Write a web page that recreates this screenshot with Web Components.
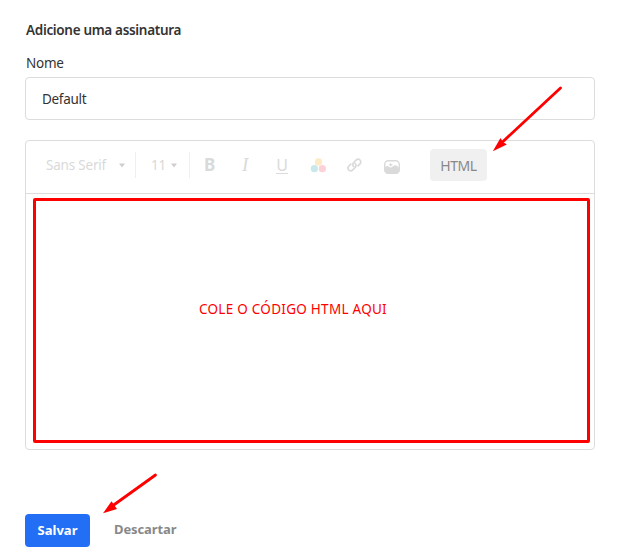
<!DOCTYPE html>
<html lang="pt-BR">
<head>
<meta charset="utf-8">
<title>Adicione uma assinatura</title>
<style>
html,body{margin:0;background:#fff}
body{width:624px;height:558px;overflow:hidden;font-family:"Noto Sans","Open Sans",sans-serif;color:#333}
</style>
</head>
<body>
<signature-page></signature-page>
<script>
const define = (name, html) => {
  const t = document.createElement('template');
  t.innerHTML = html;
  customElements.define(name, class extends HTMLElement {
    constructor() {
      super();
      this.attachShadow({ mode: 'open' }).append(t.content.cloneNode(true));
    }
  });
};

define('text-field', `
<style>
:host{display:block;font-size:13.5px}
.label{display:block;height:18px;line-height:18px;padding-left:1px;letter-spacing:-.25px}
.box{box-sizing:border-box;height:43px;margin-top:5px;border:1px solid #dcdcdc;border-radius:4px;padding:0 16px;line-height:42px;letter-spacing:-.3px}
</style>
<span class="label"><slot name="label"></slot></span><div class="box"><slot></slot></div>`);

define('drop-select', `
<style>
:host{display:flex;align-items:center;justify-content:space-between;box-sizing:border-box;height:26px;color:#d9d9d9;font-size:13.5px;letter-spacing:-.2px;border-right:1px solid #efefef;line-height:26px}
svg{display:block}
</style>
<span><slot></slot></span><svg width="6" height="5" viewBox="0 0 6 5"><path d="M0 .5H6L3 4.5Z" fill="#cfcfcf"/></svg>`);

define('tool-icon', `
<style>:host{display:block;color:#dadada;height:18px} ::slotted(svg){display:block}</style><slot></slot>`);

define('html-toggle', `
<style>:host{display:block;box-sizing:border-box;width:57px;height:32px;border-radius:4px;background:#f0f0f0;color:#888;font-size:14px;line-height:33px;text-align:center;letter-spacing:-.4px}</style><slot></slot>`);

define('editor-toolbar', `
<style>
:host{display:flex;height:52px;border-bottom:1px solid #dcdcdc;box-sizing:content-box;padding-left:20px}
drop-select{margin-top:11px}
.font{width:90px;padding-right:10px}
.size{width:54px;padding:0 12px 0 15px}
.icons{display:grid;grid-template-columns:38px 34px 33px 37px 37px 39px;margin:15px 0 0 14px}
html-toggle{margin-top:8px;margin-left:8px}
.b,.i,.u{font-size:17px;line-height:18px}
.b{font-weight:700}
.i{font-family:"Liberation Serif",serif;font-style:italic;font-size:19px}
.u{height:18px}
</style>
<drop-select class="font">Sans Serif</drop-select>
<drop-select class="size">11</drop-select>
<div class="icons">
<tool-icon class="b">B</tool-icon>
<tool-icon class="i">I</tool-icon>
<tool-icon class="u"><span style="display:inline-block;width:12px;height:16px;line-height:17px;text-align:center;border-bottom:1px solid;font-size:16px">U</span></tool-icon>
<tool-icon><svg width="18" height="18" viewBox="0 0 18 18"><circle cx="9.5" cy="6" r="3.7" fill="#fdebc8"/><circle cx="5.4" cy="12.7" r="3.6" fill="#c8e9eb"/><circle cx="13.4" cy="12.7" r="3.6" fill="#fcd2d8"/></svg></tool-icon>
<tool-icon><svg width="18" height="18" viewBox="0 0 18 18" fill="none" stroke="currentColor" stroke-width="1.7" stroke-linecap="round"><path d="M7.7 10.7C6.4 9.5 6.5 7.7 7.7 6.5L10 4.2C11.2 3 12.9 2.9 14 4S15 6.9 13.8 8.1L12 9.9"/><path d="M9 7.3C10.3 8.5 10.3 10.3 9.1 11.5L6.8 13.8C5.6 15 3.9 15.1 2.8 14S1.8 11.1 3 9.9L4.8 8.1"/></svg></tool-icon>
<tool-icon><svg width="18" height="18" viewBox="0 0 18 18"><rect x="1.7" y="4.7" width="14.6" height="12.6" rx="3.6" fill="none" stroke="currentColor" stroke-width="1.4"/><path d="M1.5 11.5C3.2 9.5 4.8 9.5 6.6 11.2Q7.5 12 8.5 11.2L10.2 10Q12.5 8.5 14.4 10.2L16.5 12.1V14Q16.3 17.5 13 17.5H5Q1.7 17.5 1.5 14Z" fill="currentColor"/><path d="M7.7 6.4L8.4 8L10 8.7L8.4 9.4L7.7 11L7 9.4L5.4 8.7L7 8Z" fill="currentColor"/></svg></tool-icon>
</div>
<html-toggle>HTML</html-toggle>`);

define('code-area', `
<style>
:host{display:block;box-sizing:border-box;width:557px;height:245px;margin:4px 0 0 7px;border:3px solid #fe0000;border-radius:2px;color:#fe0000;font-size:13.5px;line-height:18px;padding:99px 0 0 163px;letter-spacing:.27px}
</style><slot></slot>`);

define('signature-editor', `
<style>:host{display:block;box-sizing:border-box;height:310px;border:1px solid #dcdcdc;border-radius:4px}</style><slot></slot>`);

define('action-button', `
<style>
:host{display:block;font-weight:700;font-size:13px;line-height:33px;height:33px;color:#888;letter-spacing:-.1px}
:host([primary]){width:65px;text-align:center;background:#226ff5;color:#fff;border-radius:4px;letter-spacing:.05px}
</style><slot></slot>`);

define('pointer-arrow', `
<style>:host{display:block;position:absolute;inset:0;pointer-events:none}</style>
<svg width="624" height="558" viewBox="0 0 624 558" fill="#fe0000" stroke="#fe0000">
<path d="M560.5 88L503 141.5" stroke-width="2.8" stroke-linecap="round"/><path d="M492.8 151.3L500.5 138L503 142L506.8 144.5Z" stroke="none"/>
<path d="M155.5 475L113 505.5" stroke-width="2.8" stroke-linecap="round"/><path d="M103 513.3L111.5 501.3L117 509Z" stroke="none"/>
</svg>`);

define('signature-page', `
<style>
:host{display:block;box-sizing:border-box;width:624px;height:558px;padding:21px 29px 0 25px;position:relative}
h1{margin:0 0 15px;padding-left:1px;font-size:13.5px;line-height:18px;font-weight:600;letter-spacing:-.32px}
signature-editor{margin-top:20px}
footer{display:flex;margin-top:64px;gap:24px}
</style>
<h1>Adicione uma assinatura</h1>
<text-field><span slot="label">Nome</span>Default</text-field>
<signature-editor><editor-toolbar></editor-toolbar><code-area>COLE O CÓDIGO HTML AQUI</code-area></signature-editor>
<footer><action-button primary>Salvar</action-button><action-button style="line-height:31px">Descartar</action-button></footer>
<pointer-arrow></pointer-arrow>`);
</script>
</body>
</html>
